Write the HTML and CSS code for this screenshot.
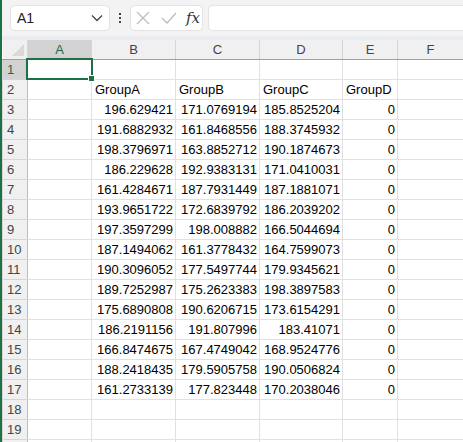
FILE: index.html
```html
<!DOCTYPE html>
<html lang="en">
<head>
    <meta charset="UTF-8">
    <title>Sheet1</title>
    <link rel="stylesheet" href="styles.css">
</head>
<body>
    <div class="app">
        <div class="formula-bar">
            <div class="name-box">
                <span>A1</span>
                <svg class="chevron" width="12" height="8" viewBox="0 0 12 8"><path d="M1 1.5 L6 6.5 L11 1.5" fill="none" stroke="#444" stroke-width="1.3"/></svg>
            </div>
            <div class="dots"><i></i><i></i><i></i></div>
            <div class="fx-box">
                <svg width="14" height="14" viewBox="0 0 14 14"><path d="M1 1 L13 13 M13 1 L1 13" stroke="#bdbdbd" stroke-width="1.3" fill="none"/></svg>
                <svg width="16" height="14" viewBox="0 0 16 14"><path d="M1 7 L6 12 L15 2" stroke="#bdbdbd" stroke-width="1.3" fill="none"/></svg>
                <span class="fx">fx</span>
            </div>
            <div class="formula-input"></div>
        </div>
        <div class="strip"></div>

        <div class="grid-wrap">
            <table class="sheet">
                <colgroup>
                    <col class="c-row"><col class="c-a"><col class="c-b"><col class="c-c"><col class="c-d"><col class="c-e"><col class="c-f">
                </colgroup>
                <thead>
                    <tr>
                        <th class="corner"><span class="tri"></span></th>
                        <th class="sel">A</th><th>B</th><th>C</th><th>D</th><th>E</th><th>F</th>
                    </tr>
                </thead>
                <tbody>
                    <tr><th class="sel">1</th><td></td><td></td><td></td><td></td><td></td><td></td></tr>
                    <tr><th>2</th><td></td><td>GroupA</td><td>GroupB</td><td>GroupC</td><td>GroupD</td><td></td></tr>
                    <tr><th>3</th><td></td><td class="num">196.629421</td><td class="num">171.0769194</td><td class="num">185.8525204</td><td class="num">0</td><td></td></tr>
                    <tr><th>4</th><td></td><td class="num">191.6882932</td><td class="num">161.8468556</td><td class="num">188.3745932</td><td class="num">0</td><td></td></tr>
                    <tr><th>5</th><td></td><td class="num">198.3796971</td><td class="num">163.8852712</td><td class="num">190.1874673</td><td class="num">0</td><td></td></tr>
                    <tr><th>6</th><td></td><td class="num">186.229628</td><td class="num">192.9383131</td><td class="num">171.0410031</td><td class="num">0</td><td></td></tr>
                    <tr><th>7</th><td></td><td class="num">161.4284671</td><td class="num">187.7931449</td><td class="num">187.1881071</td><td class="num">0</td><td></td></tr>
                    <tr><th>8</th><td></td><td class="num">193.9651722</td><td class="num">172.6839792</td><td class="num">186.2039202</td><td class="num">0</td><td></td></tr>
                    <tr><th>9</th><td></td><td class="num">197.3597299</td><td class="num">198.008882</td><td class="num">166.5044694</td><td class="num">0</td><td></td></tr>
                    <tr><th>10</th><td></td><td class="num">187.1494062</td><td class="num">161.3778432</td><td class="num">164.7599073</td><td class="num">0</td><td></td></tr>
                    <tr><th>11</th><td></td><td class="num">190.3096052</td><td class="num">177.5497744</td><td class="num">179.9345621</td><td class="num">0</td><td></td></tr>
                    <tr><th>12</th><td></td><td class="num">189.7252987</td><td class="num">175.2623383</td><td class="num">198.3897583</td><td class="num">0</td><td></td></tr>
                    <tr><th>13</th><td></td><td class="num">175.6890808</td><td class="num">190.6206715</td><td class="num">173.6154291</td><td class="num">0</td><td></td></tr>
                    <tr><th>14</th><td></td><td class="num">186.2191156</td><td class="num">191.807996</td><td class="num">183.41071</td><td class="num">0</td><td></td></tr>
                    <tr><th>15</th><td></td><td class="num">166.8474675</td><td class="num">167.4749042</td><td class="num">168.9524776</td><td class="num">0</td><td></td></tr>
                    <tr><th>16</th><td></td><td class="num">188.2418435</td><td class="num">179.5905758</td><td class="num">190.0506824</td><td class="num">0</td><td></td></tr>
                    <tr><th>17</th><td></td><td class="num">161.2733139</td><td class="num">177.823448</td><td class="num">170.2038046</td><td class="num">0</td><td></td></tr>
                    <tr><th>18</th><td></td><td></td><td></td><td></td><td></td><td></td></tr>
                    <tr><th>19</th><td></td><td></td><td></td><td></td><td></td><td></td></tr>
                    <tr><th></th><td></td><td></td><td></td><td></td><td></td><td></td></tr>
                </tbody>
            </table>
            <!-- cursor box over cell A1 -->
            <div class="selection"><span class="handle"></span></div>
        </div>
    </div>
</body>
</html>
```

FILE: styles.css
```css
body {
    margin: 0;
    background-color: white;
    font-family: "Liberation Sans", Arial, sans-serif;
    overflow: hidden;
}
.app {
    border-left: 2px solid #1e7145;
    height: 442px;
    overflow: hidden;
}
.formula-bar {
    display: flex;
    align-items: center;
    height: 36px;
    padding-left: 8px;
    background-color: #f3f3f3;
    white-space: nowrap;
}
.name-box {
    display: flex;
    align-items: center;
    justify-content: space-between;
    box-sizing: border-box;
    width: 100px;
    height: 26px;
    padding: 0 6px 0 6px;
    background-color: white;
    border: 1px solid #e3e3e3;
    border-radius: 5px;
    font-size: 14px;
    color: #222;
}
.dots {
    display: flex;
    flex-direction: column;
    gap: 2px;
    margin: 0 9px 0 9px;
}
.dots i {
    display: block;
    width: 2px;
    height: 2px;
    background-color: #444;
}
.fx-box {
    display: flex;
    align-items: center;
    gap: 11px;
    box-sizing: border-box;
    width: 73px;
    height: 26px;
    padding-left: 5px;
    background-color: white;
    border: 1px solid #e3e3e3;
    border-radius: 5px;
}
.fx {
    font-family: "DejaVu Serif", serif;
    font-style: italic;
    font-size: 15px;
    color: #333;
    margin-left: -2px;
}
.formula-input {
    flex: 1;
    height: 26px;
    margin-left: 5px;
    box-sizing: border-box;
    background-color: white;
    border: 1px solid #e3e3e3;
    border-right: none;
    border-radius: 5px 0 0 5px;
}
.strip {
    height: 4px;
    background-color: #e9edf1;
}
.grid-wrap {
    position: relative;
}
.sheet {
    table-layout: fixed;
    border-collapse: collapse;
    width: 461px;
    font-size: 13px;
    color: #000;
}
.c-row { width: 25px; }
.c-a { width: 64px; }
.c-b { width: 84px; }
.c-c { width: 84px; }
.c-d { width: 83px; }
.c-e { width: 55px; }
.c-f { width: 66px; }
th, td {
    height: 19px;
    padding: 0 3px;
    border: 1px solid #e1e1e1;
    overflow: hidden;
    white-space: nowrap;
    line-height: 19px;
}
td {
    text-align: left;
}
td.num {
    text-align: right;
    padding-right: 2px;
}
th {
    background-color: #f0f0f0;
    border-color: #d5d5d5;
    font-weight: normal;
    color: #444;
    text-align: center;
}
thead th {
    height: 18px;
    border-top: none;
    border-bottom: 1px solid #9f9f9f;
}
tbody th {
    text-align: left;
    padding-left: 4px;
    border-right: 1px solid #bdbdbd;
}
th.sel {
    background-color: #d2d2d2;
    color: #1e6a40;
}
.corner {
    position: relative;
    border-left: none;
}
.tri {
    position: absolute;
    right: 3px;
    bottom: 3px;
    width: 0;
    height: 0;
    border-left: 12px solid transparent;
    border-bottom: 12px solid #d9d9d9;
}
.selection {
    position: absolute;
    left: 24px;
    top: 18px;
    width: 63px;
    height: 18px;
    border: 2px solid #1e7145;
}
.handle {
    position: absolute;
    right: -4px;
    bottom: -4px;
    width: 5px;
    height: 5px;
    background-color: #1e7145;
    border: 1px solid white;
}
```
